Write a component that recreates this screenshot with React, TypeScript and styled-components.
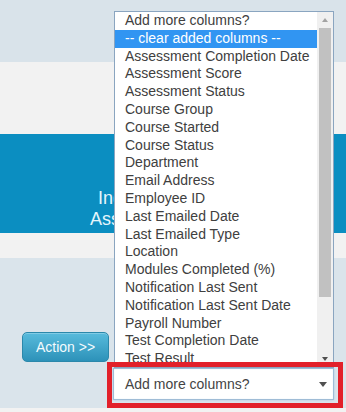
import styled, { createGlobalStyle } from "styled-components";

const GlobalStyle = createGlobalStyle`
  html,
  body {
    margin: 0;
    padding: 0;
  }
  body {
    font-family: "Liberation Sans", Arial, sans-serif;
    background: #f2f2f2;
  }
`;

const Page = styled.div`
  width: 346px;
  height: 412px;
  overflow: hidden;
  display: flex;
  flex-direction: column;
`;

const TopBar = styled.div`
  flex: none;
  height: 62px;
  background: #d9e3ea;
`;

const Strip = styled.div<{ $h: number }>`
  flex: none;
  height: ${(p) => p.$h}px;
  background: #f2f2f2;
`;

const Banner = styled.header`
  flex: none;
  height: 99px;
  box-sizing: border-box;
  padding-top: 54px;
  background: #0b8ec1;
  color: #e6f6fc;
  font-size: 18px;
  line-height: 21px;
  text-align: center;
`;

const BannerLine = styled.div`
  white-space: nowrap;
`;

const ActionPanel = styled.section`
  flex: none;
  height: 150px;
  box-sizing: border-box;
  padding: 0 0 8px 22px;
  background: #dae4eb;
  display: flex;
  align-items: flex-end;
  gap: 4px;
`;

const ActionButton = styled.button`
  width: 87px;
  height: 30px;
  margin-bottom: 38px;
  padding: 0;
  border: 1px solid #2b88ab;
  border-radius: 5px;
  background: linear-gradient(#58bbdc, #2d92b9);
  box-shadow: inset 0 1px 0 rgba(255, 255, 255, 0.25);
  color: #f4fbfe;
  font: 14px "Liberation Sans", Arial, sans-serif;
`;

const SelectAnchor = styled.div`
  position: relative;
  width: 221px;
  height: 32px;

  /* red callout drawn over the open list */
  &::after {
    content: "";
    position: absolute;
    top: -6px;
    left: -6px;
    right: -9px;
    bottom: -8px;
    border: 5px solid #e2202a;
    z-index: 3;
    pointer-events: none;
  }
`;

const SelectBox = styled.div`
  height: 100%;
  box-sizing: border-box;
  padding: 0 6px 0 11px;
  border: 1px solid #9fbcd6;
  background: #fff;
  box-shadow: 0 0 2px #a8c8e6, inset 0 0 1px #c4daee;
  display: flex;
  align-items: center;
  justify-content: space-between;
  font-size: 14px;
  color: #444;
`;

const Caret = styled.span<{ $up?: boolean; $dim?: boolean; $size?: number }>`
  width: 0;
  height: 0;
  border-left: ${(p) => p.$size ?? 3.5}px solid transparent;
  border-right: ${(p) => p.$size ?? 3.5}px solid transparent;
  ${(p) => (p.$up ? "border-bottom" : "border-top")}: ${(p) =>
      p.$size ? p.$size + 1 : 4}px solid
    ${(p) => (p.$dim ? "#a3a3a3" : "#505050")};
`;

const Dropdown = styled.div`
  position: absolute;
  left: 1px;
  bottom: 100%;
  width: 220px;
  height: 357px;
  box-sizing: border-box;
  border: 1px solid #8aa5c0;
  background: #fff;
  display: flex;
  z-index: 2;
`;

const OptionList = styled.ul`
  flex: 1;
  margin: 0;
  padding: 0;
  list-style: none;
  overflow: hidden;
`;

const Option = styled.li<{ $selected?: boolean }>`
  height: 17.8px;
  line-height: 17.8px;
  padding-left: 10px;
  font-size: 14px;
  white-space: nowrap;
  color: ${(p) => (p.$selected ? "#fff" : "#404040")};
  background: ${(p) => (p.$selected ? "#3195f2" : "transparent")};
`;

const ScrollBar = styled.div`
  width: 16px;
  background: #f0f0f0;
  display: flex;
  flex-direction: column;
`;

const ScrollArrow = styled.div`
  flex: none;
  height: 16px;
  display: flex;
  align-items: center;
  justify-content: center;
`;

const ScrollTrack = styled.div`
  flex: 1;
  padding: 0 2px;
`;

const ScrollThumb = styled.div`
  height: 269px;
  background: #c1c1c1;
`;

const columns = [
  "Add more columns?",
  "-- clear added columns --",
  "Assessment Completion Date",
  "Assessment Score",
  "Assessment Status",
  "Course Group",
  "Course Started",
  "Course Status",
  "Department",
  "Email Address",
  "Employee ID",
  "Last Emailed Date",
  "Last Emailed Type",
  "Location",
  "Modules Completed (%)",
  "Notification Last Sent",
  "Notification Last Sent Date",
  "Payroll Number",
  "Test Completion Date",
  "Test Result",
];

function App() {
  return (
    <Page>
      <GlobalStyle />
      <TopBar />
      <Strip $h={72} />
      <Banner>
        <BannerLine>Induction Progress</BannerLine>
        <BannerLine>Assessment Reports</BannerLine>
      </Banner>
      <Strip $h={25} />
      <ActionPanel>
        <ActionButton>Action &gt;&gt;</ActionButton>
        <SelectAnchor>
          <Dropdown>
            <OptionList>
              {columns.map((c, i) => (
                <Option key={c} $selected={i === 1}>
                  {c}
                </Option>
              ))}
            </OptionList>
            <ScrollBar>
              <ScrollArrow>
                <Caret $up $dim />
              </ScrollArrow>
              <ScrollTrack>
                <ScrollThumb />
              </ScrollTrack>
              <ScrollArrow>
                <Caret />
              </ScrollArrow>
            </ScrollBar>
          </Dropdown>
          <SelectBox>
            Add more columns?
            <Caret $size={4} />
          </SelectBox>
        </SelectAnchor>
      </ActionPanel>
      <Strip $h={4} />
    </Page>
  );
}

export default App;
